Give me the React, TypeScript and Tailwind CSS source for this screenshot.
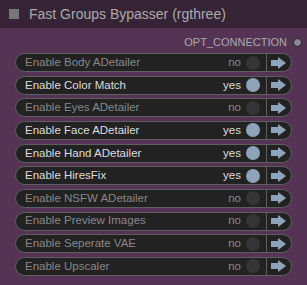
import React from 'react'

type Row = { label: string; on: boolean }

const rows: Row[] = [
  { label: 'Enable Body ADetailer', on: false },
  { label: 'Enable Color Match', on: true },
  { label: 'Enable Eyes ADetailer', on: false },
  { label: 'Enable Face ADetailer', on: true },
  { label: 'Enable Hand ADetailer', on: true },
  { label: 'Enable HiresFix', on: true },
  { label: 'Enable NSFW ADetailer', on: false },
  { label: 'Enable Preview Images', on: false },
  { label: 'Enable Seperate VAE', on: false },
  { label: 'Enable Upscaler', on: false },
]

function Arrow() {
  return (
    <svg width="15" height="12" viewBox="0 0 15 12" className="block">
      <path d="M0 3h7V0l8 6-8 6V9H0z" fill="#8fa4ba" />
    </svg>
  )
}

function ToggleRow({ label, on }: Row) {
  return (
    <div className="flex h-[19px] items-center rounded-full border border-[#5f5f5f] bg-[#222222]">
      <span className={`flex-1 truncate pl-[9px] text-[11.5px] ${on ? 'text-[#dddddd]' : 'text-[#888888]'}`}>
        {label}
      </span>
      <span className={`text-[11.5px] ${on ? 'text-[#dddddd]' : 'text-[#888888]'}`}>{on ? 'yes' : 'no'}</span>
      <span
        className={`ml-[5px] h-[14px] w-[14px] rounded-full ${on ? 'bg-[#8fa3b8]' : 'bg-[#353535]'}`}
      />
      <div className="ml-[6px] flex h-full w-[25px] items-center justify-center border-l border-[#5f5f5f] pr-[2px]">
        <Arrow />
      </div>
    </div>
  )
}

export default function App() {
  return (
    <div
      className="h-[285px] w-[307px] overflow-hidden bg-[#553355]"
      style={{ fontFamily: '"Liberation Sans", Arial, sans-serif' }}
    >
      {/* title bar */}
      <div className="flex h-[28px] items-center bg-[#362336] pl-[9px]">
        <span className="h-[10px] w-[10px] bg-[#777777]" />
        <span className="ml-[10px] text-[14px] text-[#aaaaaa]">Fast Groups Bypasser (rgthree)</span>
      </div>

      <div className="px-[15px] pt-[7px]">
        {/* output slot */}
        <div className="flex h-[14px] items-center justify-end">
          <span className="text-[11px] text-[#aaaaaa]">OPT_CONNECTION</span>
          <span className="ml-[6px] mr-[-10px] h-[9px] w-[9px] rounded-full border border-[#222222] bg-[#8a8a9a]" />
        </div>

        <div className="mt-[4px] flex flex-col gap-[3.67px]">
          {rows.map((r) => (
            <ToggleRow key={r.label} {...r} />
          ))}
        </div>
      </div>
    </div>
  )
}
